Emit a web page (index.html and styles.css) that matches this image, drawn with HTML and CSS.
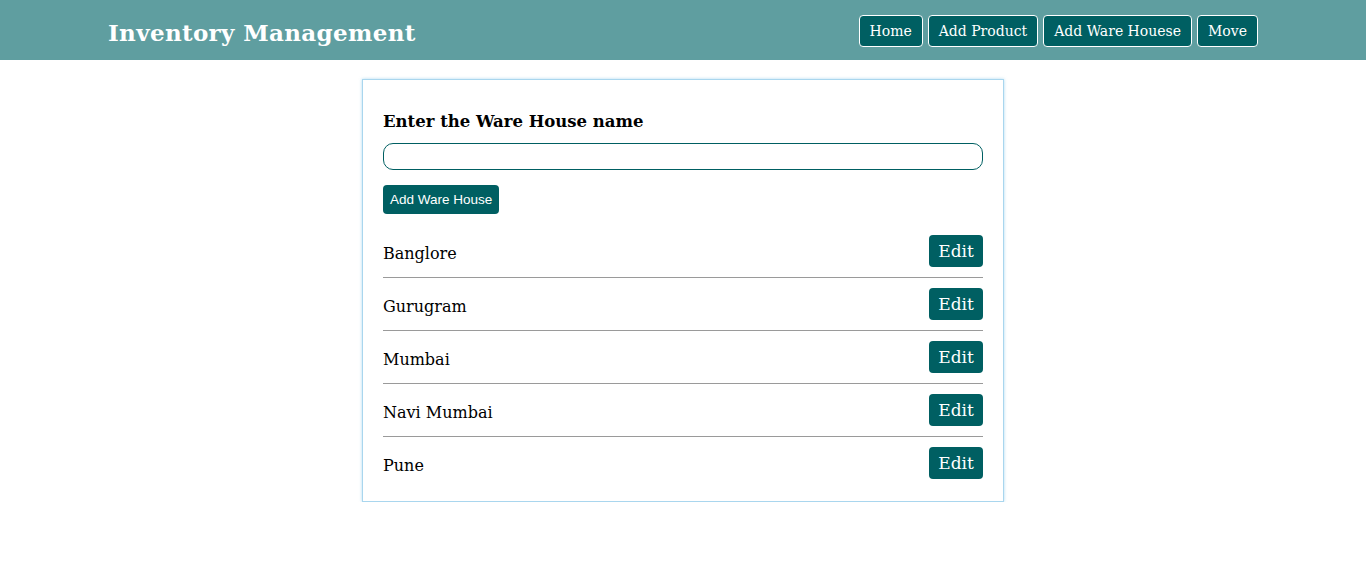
FILE: index.html
```html
<!DOCTYPE html>
<html lang="en">
<head>
<meta charset="utf-8">
<title>Inventory Management</title>
<link rel="stylesheet" href="styles.css">
</head>
<body>
<header class="topbar">
  <div class="brand">Inventory Management</div>
  <nav class="nav">
    <a class="nav-btn" href="#">Home</a>
    <a class="nav-btn" href="#">Add Product</a>
    <a class="nav-btn" href="#">Add Ware Houese</a>
    <a class="nav-btn" href="#">Move</a>
  </nav>
</header>
<main class="main">
  <section class="card">
    <h3 class="card-title">Enter the Ware House name</h3>
    <input class="text-input" type="text">
    <div class="actions"><button class="add-btn">Add Ware House</button></div>
    <ul class="list">
      <li class="row"><span class="row-name">Banglore</span><button class="edit-btn">Edit</button></li>
      <li class="row"><span class="row-name">Gurugram</span><button class="edit-btn">Edit</button></li>
      <li class="row"><span class="row-name">Mumbai</span><button class="edit-btn">Edit</button></li>
      <li class="row"><span class="row-name">Navi Mumbai</span><button class="edit-btn">Edit</button></li>
      <li class="row last"><span class="row-name">Pune</span><button class="edit-btn">Edit</button></li>
    </ul>
  </section>
</main>
</body>
</html>
```
FILE: styles.css
```css
* { box-sizing: border-box; }
body {
  margin: 0;
  font-family: "DejaVu Serif", Georgia, serif;
  color: #000;
  background: #fff;
}
.topbar {
  height: 60px;
  background: #5f9ea0;
  display: flex;
  align-items: center;
  justify-content: space-between;
  padding: 0 108px 0 108px;
}
.brand {
  color: #fff;
  font-weight: bold;
  font-size: 23px;
  letter-spacing: 0.35px;
  padding-top: 5px;
}
.nav {
  display: flex;
  gap: 5px;
  margin-top: 2px;
}
.nav-btn {
  display: inline-block;
  height: 32px;
  line-height: 30px;
  padding: 0 10px;
  background: #005f62;
  color: #fff;
  border: 1px solid #fff;
  border-radius: 4px;
  text-decoration: none;
  font-size: 14px;
}
.main {
  display: flex;
  justify-content: center;
  padding-top: 19px;
}
.card {
  width: 642px;
  border: 1px solid #a9d6ee;
  box-shadow: 0 0 3px rgba(110, 190, 230, 0.55);
  padding: 29px 20px 12px 20px;
}
.card-title {
  margin: 0 0 8px 0;
  font-size: 16.5px;
  font-weight: bold;
  line-height: 26px;
}
.text-input {
  display: block;
  width: 100%;
  height: 27px;
  border: 1px solid #005f62;
  border-radius: 10px;
  outline: none;
}
.actions {
  margin-top: 15px;
}
.add-btn {
  height: 29px;
  padding: 0 7px;
  background: #005f62;
  color: #fff;
  border: none;
  border-radius: 4px;
  font-family: "Liberation Sans", Arial, sans-serif;
  font-size: 13.5px;
}
.list {
  list-style: none;
  margin: 11px 0 0 0;
  padding: 0;
}
.row {
  display: flex;
  align-items: center;
  justify-content: space-between;
  padding: 10px 0;
  border-bottom: 1px solid #9a9a9a;
}
.row.last { border-bottom: none; }
.row-name {
  font-size: 16px;
  padding-top: 5px;
}
.edit-btn {
  height: 32px;
  width: 54px;
  background: #005f62;
  color: #fff;
  border: none;
  border-radius: 4px;
  font-family: "DejaVu Serif", Georgia, serif;
  font-size: 17px;
  padding: 0;
}
```
